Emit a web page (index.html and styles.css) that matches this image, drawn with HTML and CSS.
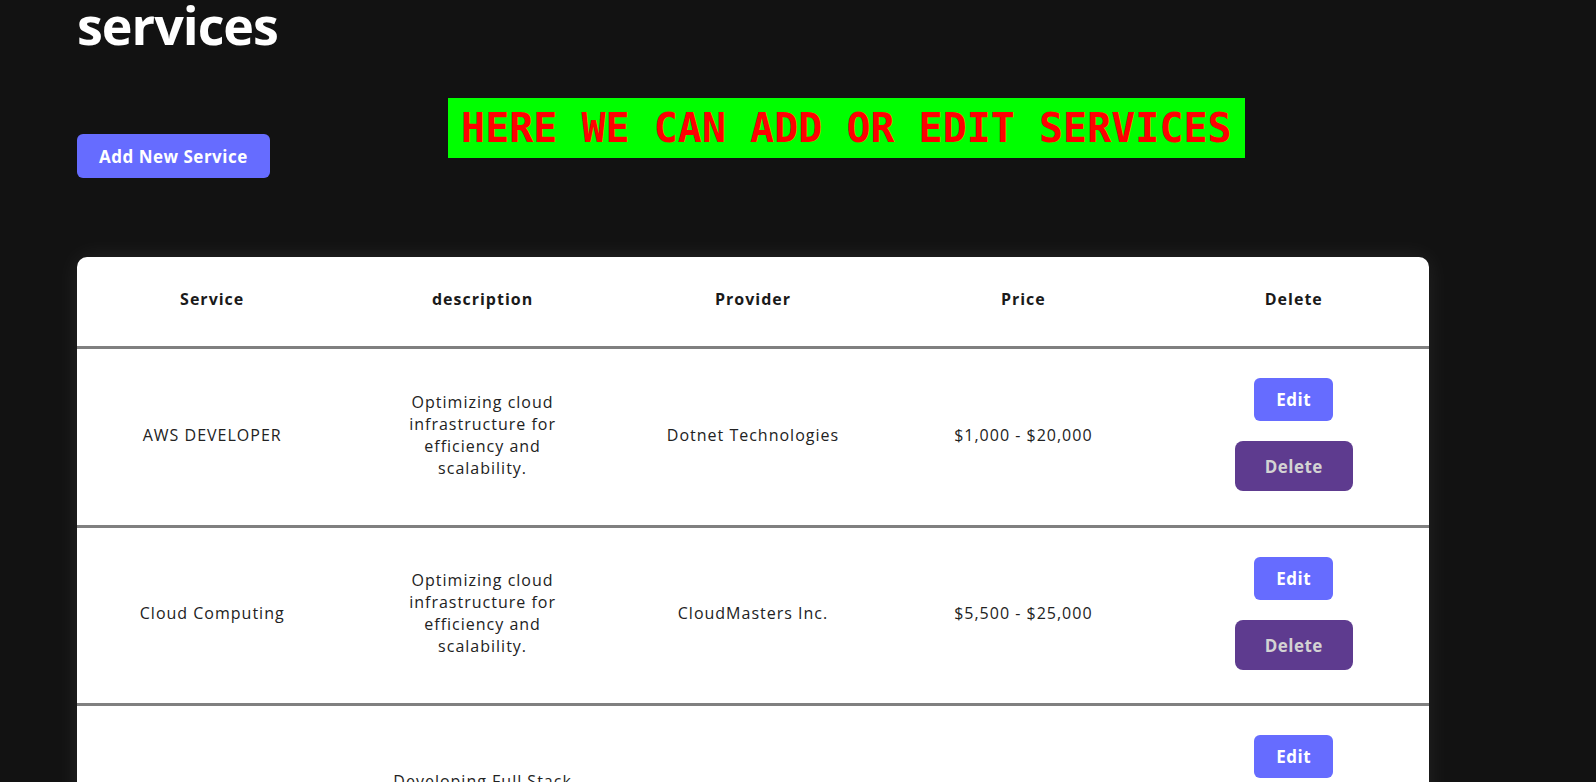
FILE: index.html
```html
<!DOCTYPE html>
<html lang="en">
<head>
<meta charset="utf-8">
<title>services</title>
<link rel="stylesheet" href="styles.css">
</head>
<body>
<main class="page">
  <h1 class="title">services</h1>
  <div class="toolbar">
    <button class="btn btn-add">Add New Service</button>
    <div class="banner-wrap">
      <div class="banner">HERE WE CAN ADD OR EDIT SERVICES</div>
    </div>
  </div>
  <section class="card">
    <table class="table">
      <thead>
        <tr>
          <th>Service</th>
          <th>description</th>
          <th>Provider</th>
          <th>Price</th>
          <th>Delete</th>
        </tr>
      </thead>
      <tbody>
        <tr>
          <td>AWS DEVELOPER</td>
          <td>Optimizing cloud infrastructure for efficiency and scalability.</td>
          <td>Dotnet Technologies</td>
          <td>$1,000 - $20,000</td>
          <td><div class="actions"><button class="btn btn-edit">Edit</button><button class="btn btn-delete">Delete</button></div></td>
        </tr>
        <tr>
          <td>Cloud Computing</td>
          <td>Optimizing cloud infrastructure for efficiency and scalability.</td>
          <td>CloudMasters Inc.</td>
          <td>$5,500 - $25,000</td>
          <td><div class="actions"><button class="btn btn-edit">Edit</button><button class="btn btn-delete">Delete</button></div></td>
        </tr>
        <tr>
          <td>Web Developer</td>
          <td>Developing Full Stack Applications.</td>
          <td>WebCrafters Ltd.</td>
          <td>$2,000 - $15,000</td>
          <td><div class="actions"><button class="btn btn-edit">Edit</button><button class="btn btn-delete">Delete</button></div></td>
        </tr>
      </tbody>
    </table>
  </section>
</main>
</body>
</html>
```
FILE: styles.css
```css
* { box-sizing: border-box; }

html, body {
  margin: 0;
  padding: 0;
  background: #121212;
  height: 782px;
  overflow: hidden;
}

body {
  font-family: "Open Sans", "Noto Sans", sans-serif;
  color: #222;
}

.page {
  padding: 0 167px 0 77px;
}

.title {
  margin: -1px 0 0;
  font-size: 52px;
  line-height: 52px;
  font-weight: 700;
  letter-spacing: -1px;
  color: #ffffff;
}

.toolbar {
  display: flex;
  align-items: flex-start;
  margin-top: 47px;
}

.btn {
  font-family: "Open Sans", "Noto Sans", sans-serif;
  font-size: 17px;
  line-height: 23px;
  font-weight: 700;
  letter-spacing: 0.5px;
  border: none;
  cursor: pointer;
}

.btn-add {
  margin-top: 36px;
  padding: 11px 22px 10px;
  background: #666cff;
  color: #ffffff;
  border-radius: 6px;
}

.banner-wrap {
  flex: 1;
  display: flex;
  justify-content: center;
  padding-right: 6px;
}

.banner {
  background: #00ff00;
  color: #ff0000;
  font-family: "DejaVu Sans Mono", "Liberation Mono", monospace;
  font-weight: 700;
  font-size: 40px;
  line-height: 60px;
  padding: 0 13px;
  white-space: nowrap;
}

.card {
  margin-top: 79px;
  background: #ffffff;
  border-radius: 10px;
  box-shadow: 0 0 25px rgba(255, 255, 255, 0.08);
}

.table {
  width: 100%;
  border-collapse: collapse;
  table-layout: fixed;
  font-size: 16px;
  line-height: 22px;
  letter-spacing: 1px;
  text-align: center;
}

.table th {
  padding: 31px 10px 36px;
  font-weight: 700;
  color: #1a1a1a;
  border-bottom: 3px solid #808080;
}

.table td {
  padding: 29px 38px 33.5px;
  vertical-align: middle;
  color: #222;
  border-bottom: 3px solid #808080;
}

.actions {
  display: flex;
  flex-direction: column;
  align-items: center;
  gap: 20px;
}

.btn-edit {
  padding: 10px 22px;
  background: #666cff;
  color: #ffffff;
  border-radius: 6px;
}

.btn-delete {
  padding: 14px 30px 13px;
  background: #5e3b8f;
  color: #d3d3d3;
  border-radius: 8px;
}
```
